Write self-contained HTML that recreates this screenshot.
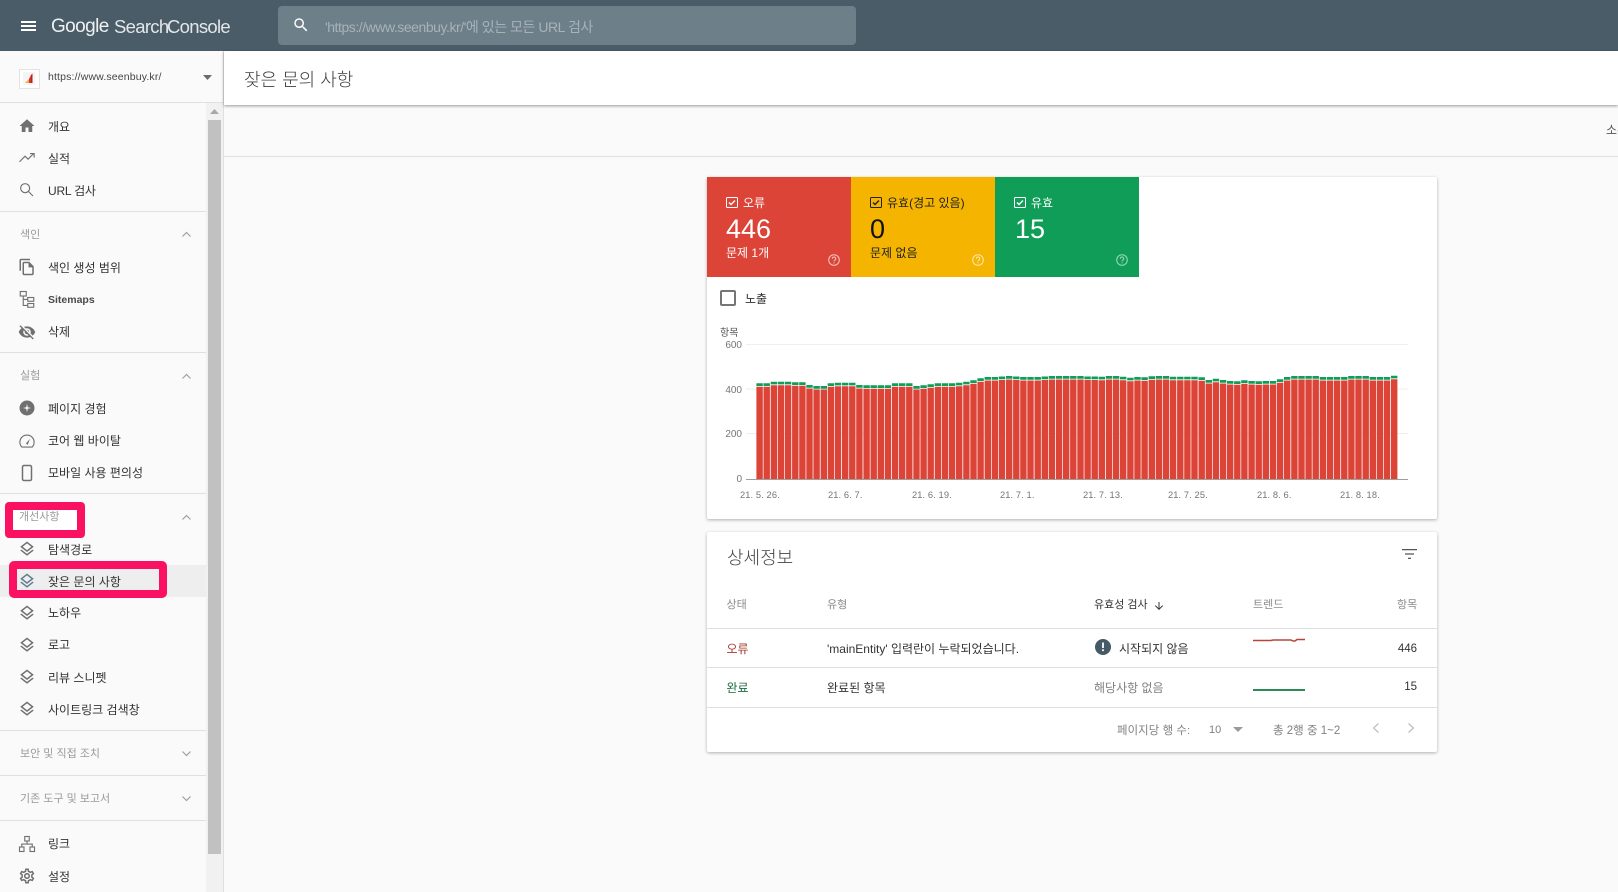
<!DOCTYPE html>
<html lang="ko"><head><meta charset="utf-8"><title>Search Console</title>
<style>
html,body{margin:0;padding:0;width:1618px;height:892px;overflow:hidden;background:#fafafa;font-family:"Liberation Sans","Noto Sans CJK KR",sans-serif;color:#333}
.t{position:absolute;white-space:nowrap;line-height:20px;font-size:12px}
.b{position:absolute}
.d{position:absolute;left:0;width:206px;height:1px;background:#e0e0e0}
.s{color:#9a9a9a;font-size:11px}
svg{position:absolute;overflow:visible}
.i{width:18px;height:18px;left:18px;fill:#707070}
.h{color:#8a8a8a;font-size:11px}
.w{color:#fff}
.ch{fill:none;stroke:#a0a0a0;stroke-width:1.2}
</style></head><body>

<!-- top bar -->
<div class="b" style="left:0;top:0;width:1618px;height:51px;background:#4a5c68"></div>
<div class="b" style="left:21px;top:21px;width:15px;height:1.5px;background:#fff"></div>
<div class="b" style="left:21px;top:25px;width:15px;height:1.5px;background:#fff"></div>
<div class="b" style="left:21px;top:29px;width:15px;height:1.5px;background:#fff"></div>
<div class="t" style="left:51px;top:17px;font-size:19px;color:#eef1f2;letter-spacing:-.6px">Google</div>
<div class="t" style="left:114px;top:17px;font-size:18.5px;color:#e3e7e9;letter-spacing:-.7px">Search</div>
<div class="t" style="left:167px;top:17px;font-size:18.5px;color:#e3e7e9;letter-spacing:-.7px">Console</div>
<div class="b" style="left:278px;top:6px;width:578px;height:39px;background:#6d7f88;border-radius:4px"></div>
<svg style="left:292px;top:16px;width:18px;height:18px;fill:#fff" viewBox="0 0 24 24"><path d="M15.5 14h-.79l-.28-.27A6.471 6.471 0 0 0 16 9.5 6.5 6.5 0 1 0 9.5 16c1.61 0 3.09-.59 4.23-1.57l.27.28v.79l5 4.99L20.49 19l-4.99-5zm-6 0C7.01 14 5 11.99 5 9.5S7.01 5 9.5 5 14 7.01 14 9.5 11.99 14 9.5 14z"/></svg>
<div class="t" style="left:325px;top:17px;font-size:14px;color:#a7b3b9;letter-spacing:-.45px">'https://www.seenbuy.kr/'에 있는 모든 URL 검사</div>

<!-- sidebar -->
<div class="b" style="left:0;top:51px;width:223px;height:841px;background:#fafafa;border-right:1px solid #e0e0e0"></div>
<div class="b" style="left:0;top:102px;width:223px;height:1px;background:#e0e0e0"></div>
<div class="b" style="left:206px;top:103px;width:17px;height:789px;background:#f1f1f1"></div>
<div class="b" style="left:208px;top:120px;width:13px;height:734px;background:#c1c1c1"></div>
<svg style="left:210px;top:109px;width:9px;height:6px;fill:#a8a8a8" viewBox="0 0 9 6"><path d="M4.5 0L9 5H0z"/></svg>

<div class="b" style="left:19px;top:69px;width:19px;height:18px;background:#fff;border:1px solid #e3e3e3"></div>
<svg style="left:23px;top:72px;width:12px;height:13px" viewBox="0 0 12 13"><rect width="12" height="13" fill="#f5f5f5"/><path d="M2 11L6 7V11z" fill="#e8b33a"/><path d="M6 7L8 3V11H6z" fill="#d9322a"/><path d="M8 3l1.5-1.5V11H8z" fill="#b8261f"/></svg>
<div class="t" style="left:48px;top:67px;font-size:10.5px;color:#444;letter-spacing:.15px">https://www.seenbuy.kr/</div>
<svg style="left:203px;top:75px;width:9px;height:5px;fill:#6b6b6b" viewBox="0 0 9 5"><path d="M0 0h9L4.5 5z"/></svg>

<!-- items -->
<svg class="i" style="top:117px" viewBox="0 0 24 24"><path d="M10 20v-6h4v6h5v-8h3L12 3 2 12h3v8z"/></svg>
<div class="t" style="left:48px;top:117px">개요</div>
<svg class="i" style="top:149px;fill:none;stroke:#707070;stroke-width:1.5" viewBox="0 0 24 24"><path d="M2 17l7.400-7.400 4 4L21 6M16 6h5.500v5.500"/></svg>
<div class="t" style="left:48px;top:149px">실적</div>
<svg class="i" style="top:181px;fill:none;stroke:#707070;stroke-width:1.500" viewBox="0 0 24 24"><circle cx="9.500" cy="9.500" r="6"/><path d="M14 14l6 6"/></svg>
<div class="t" style="left:48px;top:181px;letter-spacing:-.2px">URL 검사</div>
<div class="d" style="top:211px"></div>

<div class="t s" style="left:20px;top:225px">색인</div>
<svg class="ch" style="left:182px;top:232px;width:9px;height:5px" viewBox="0 0 9 5"><path d="M.5 4.5L4.5.5l4 4"/></svg>
<svg class="i" style="top:258px" viewBox="0 0 24 24"><path d="M16 1H4c-1.1 0-2 .9-2 2v14h2V3h12V1zm-1 4l6 6v10c0 1.1-.9 2-2 2H7.99C6.89 23 6 22.1 6 21l.01-14c0-1.1.89-2 1.99-2h7zm-1 2H8v14h11v-8.5h-5V7z"/></svg>
<div class="t" style="left:48px;top:258px">색인 생성 범위</div>
<svg class="i" style="top:290px" viewBox="0 0 24 24" fill="none"><g fill="none" stroke="#707070" stroke-width="1.500"><rect x="3" y="2" width="8" height="6"/><rect x="13" y="10" width="8" height="5"/><rect x="13" y="18" width="8" height="5"/><path d="M7 8v12.500h6M7 12.500h6"/></g></svg>
<div class="t" style="left:48px;top:289.500px;font-size:10.500px;font-weight:700;color:#4a4a4a">Sitemaps</div>
<svg class="i" style="top:323px" viewBox="0 0 24 24"><path d="M12 7c2.76 0 5 2.24 5 5 0 .65-.13 1.26-.36 1.83l2.92 2.92c1.51-1.26 2.7-2.89 3.43-4.75-1.73-4.39-6-7.5-11-7.5-1.4 0-2.74.25-3.98.7l2.16 2.16C10.74 7.13 11.35 7 12 7zM2 4.27l2.28 2.28.46.46C3.08 8.3 1.78 10.02 1 12c1.73 4.39 6 7.5 11 7.5 1.55 0 3.03-.3 4.38-.84l.42.42L19.73 22 21 20.73 3.27 3 2 4.27zM7.53 9.8l1.55 1.55c-.05.21-.08.43-.08.65 0 1.66 1.34 3 3 3 .22 0 .44-.03.65-.08l1.55 1.55c-.67.33-1.41.53-2.2.53-2.76 0-5-2.24-5-5 0-.79.2-1.53.53-2.2zm4.31-.78l3.15 3.15.02-.16c0-1.66-1.34-3-3-3l-.17.01z"/></svg>
<div class="t" style="left:48px;top:322px">삭제</div>
<div class="d" style="top:352px"></div>

<div class="t s" style="left:20px;top:366px">실험</div>
<svg class="ch" style="left:182px;top:374px;width:9px;height:5px" viewBox="0 0 9 5"><path d="M.5 4.5L4.5.5l4 4"/></svg>
<svg class="i" style="top:399px" viewBox="0 0 24 24"><path d="M12 2a10 10 0 1 0 0 20 10 10 0 0 0 0-20zm5.500 10L13 13l-1 4.500L11 13l-4.500-1L11 11l1-4.500L13 11z" fill-rule="evenodd"/></svg>
<div class="t" style="left:48px;top:399px">페이지 경험</div>
<svg class="i" style="top:432px" viewBox="0 0 24 24"><g fill="none" stroke="#707070" stroke-width="1.500"><path d="M5 20a9.500 9.500 0 1 1 14 0z"/></g><path d="M10.500 15.500L16 9l-3 8z"/></svg>
<div class="t" style="left:48px;top:431px">코어 웹 바이탈</div>
<svg class="i" style="top:464px" viewBox="0 0 24 24"><rect x="6" y="2" width="12" height="20" rx="2" fill="none" stroke="#707070" stroke-width="2"/></svg>
<div class="t" style="left:48px;top:463px">모바일 사용 편의성</div>
<div class="d" style="top:493px"></div>

<!-- pink 1 -->
<div class="b" style="left:5px;top:502px;width:64px;height:20px;border:8px solid #fb1161;border-radius:4px;background:#fff"></div>
<div class="t s" style="left:19px;top:507px">개선사항</div>
<svg class="ch" style="left:182px;top:515px;width:9px;height:5px" viewBox="0 0 9 5"><path d="M.5 4.5L4.5.5l4 4"/></svg>

<svg class="i" style="top:540px" viewBox="0 0 24 24"><path d="M11.990 18.540l-7.370-5.730L3 14.070l9 7 9-7-1.630-1.270-7.380 5.740zM12 16l7.360-5.730L21 9l-9-7-9 7 1.630 1.270L12 16zm0-11.470L17.740 9 12 13.470 6.260 9 12 4.530z"/></svg>
<div class="t" style="left:48px;top:540px">탐색경로</div>

<div class="b" style="left:0;top:565px;width:206px;height:32px;background:#eeeeee"></div>
<div class="b" style="left:9px;top:561px;width:142px;height:21px;border:8px solid #fb1161;border-radius:5px"></div>
<svg class="i" style="top:572px;fill:#5f7f91" viewBox="0 0 24 24"><path d="M11.990 18.540l-7.370-5.730L3 14.070l9 7 9-7-1.630-1.270-7.380 5.740zM12 16l7.360-5.730L21 9l-9-7-9 7 1.630 1.270L12 16zm0-11.470L17.740 9 12 13.470 6.260 9 12 4.530z"/></svg>
<div class="t" style="left:48px;top:572px">잦은 문의 사항</div>

<svg class="i" style="top:604px" viewBox="0 0 24 24"><path d="M11.990 18.540l-7.370-5.730L3 14.070l9 7 9-7-1.630-1.270-7.380 5.740zM12 16l7.360-5.730L21 9l-9-7-9 7 1.630 1.270L12 16zm0-11.470L17.740 9 12 13.470 6.260 9 12 4.530z"/></svg>
<div class="t" style="left:48px;top:603px">노하우</div>
<svg class="i" style="top:636px" viewBox="0 0 24 24"><path d="M11.990 18.540l-7.370-5.730L3 14.070l9 7 9-7-1.630-1.270-7.380 5.740zM12 16l7.360-5.730L21 9l-9-7-9 7 1.630 1.270L12 16zm0-11.470L17.740 9 12 13.470 6.260 9 12 4.530z"/></svg>
<div class="t" style="left:48px;top:635px">로고</div>
<svg class="i" style="top:668px" viewBox="0 0 24 24"><path d="M11.990 18.540l-7.370-5.730L3 14.070l9 7 9-7-1.630-1.270-7.380 5.740zM12 16l7.360-5.730L21 9l-9-7-9 7 1.630 1.270L12 16zm0-11.470L17.740 9 12 13.470 6.260 9 12 4.530z"/></svg>
<div class="t" style="left:48px;top:668px">리뷰 스니펫</div>
<svg class="i" style="top:700px" viewBox="0 0 24 24"><path d="M11.990 18.540l-7.370-5.730L3 14.070l9 7 9-7-1.630-1.270-7.380 5.740zM12 16l7.360-5.730L21 9l-9-7-9 7 1.630 1.270L12 16zm0-11.470L17.740 9 12 13.470 6.260 9 12 4.530z"/></svg>
<div class="t" style="left:48px;top:700px">사이트링크 검색창</div>
<div class="d" style="top:730px"></div>

<div class="t s" style="left:20px;top:744px">보안 및 직접 조치</div>
<svg class="ch" style="left:182px;top:751px;width:9px;height:5px" viewBox="0 0 9 5"><path d="M.5.5l4 4 4-4"/></svg>
<div class="d" style="top:775px"></div>
<div class="t s" style="left:20px;top:789px">기존 도구 및 보고서</div>
<svg class="ch" style="left:182px;top:796px;width:9px;height:5px" viewBox="0 0 9 5"><path d="M.5.5l4 4 4-4"/></svg>
<div class="d" style="top:820px"></div>

<svg class="i" style="top:835px" viewBox="0 0 24 24"><g fill="none" stroke="#707070" stroke-width="1.500"><rect x="9" y="2" width="6" height="6"/><rect x="2" y="16" width="6" height="6"/><rect x="16" y="16" width="6" height="6"/><path d="M12 8v4M5 16v-4h14v4"/></g></svg>
<div class="t" style="left:48px;top:834px">링크</div>
<svg class="i" style="top:867px" viewBox="0 0 24 24"><path d="M19.430 12.980c.040-.320.070-.640.070-.980s-.030-.660-.070-.980l2.110-1.650c.190-.150.240-.420.120-.640l-2-3.460c-.120-.220-.390-.300-.610-.220l-2.490 1c-.520-.400-1.080-.730-1.690-.980l-.380-2.650C14.460 2.180 14.250 2 14 2h-4c-.250 0-.460.180-.490.420l-.380 2.650c-.610.250-1.170.590-1.690.980l-2.490-1c-.230-.090-.490 0-.610.220l-2 3.460c-.130.220-.070.490.120.640l2.110 1.650c-.040.320-.070.650-.070.980s.030.660.070.980l-2.110 1.650c-.190.150-.240.420-.120.640l2 3.460c.120.220.390.300.610.220l2.490-1c.520.400 1.080.730 1.690.980l.380 2.650c.030.240.240.420.490.420h4c.250 0 .460-.180.490-.420l.380-2.650c.610-.250 1.170-.590 1.690-.980l2.490 1c.230.090.490 0 .610-.220l2-3.460c.120-.220.070-.490-.120-.640l-2.110-1.650zM17.450 11.270c.040.310.050.520.050.730s-.020.430-.050.730l-.140 1.130.890.700 1.080.840-.700 1.210-1.270-.510-1.040-.420-.900.680c-.430.320-.840.560-1.250.730l-1.060.430-.160 1.130-.200 1.350h-1.400l-.190-1.350-.160-1.130-1.060-.430c-.430-.180-.830-.410-1.230-.710l-.910-.700-1.060.430-1.270.510-.700-1.210 1.080-.840.890-.700-.140-1.130C6.520 12.430 6.500 12.200 6.500 12s.020-.430.050-.720l.140-1.130-.890-.700-1.080-.840.700-1.210 1.270.510 1.040.420.900-.680c.430-.320.840-.560 1.250-.730l1.060-.430.160-1.130.200-1.350h1.390l.190 1.350.160 1.130 1.060.430c.430.180.830.410 1.230.710l.910.700 1.060-.430 1.270-.510.700 1.210-1.070.850-.890.700.140 1.130zM12 8c-2.210 0-4 1.790-4 4s1.790 4 4 4 4-1.790 4-4-1.790-4-4-4zm0 6c-1.100 0-2-.9-2-2s.9-2 2-2 2 .9 2 2-.9 2-2 2z"/></svg>
<div class="t" style="left:48px;top:867px">설정</div>

<!-- main header -->
<div class="b" style="left:224px;top:51px;width:1394px;height:54px;background:#fff;box-shadow:0 1px 3px rgba(0,0,0,.4)"></div>
<div class="t" style="left:244px;top:70px;font-size:18px;color:#3c3c3c;font-weight:300">잦은 문의 사항</div>
<div class="b" style="left:224px;top:156px;width:1394px;height:1px;background:#e0e0e0"></div>
<div class="b" style="left:1500px;top:120px;width:118px;height:20px;overflow:hidden"><div class="t" style="left:106px;top:0;color:#555">소유권</div></div>

<!-- card 1 -->
<div class="b" style="left:707px;top:177px;width:730px;height:342px;background:#fff;box-shadow:0 1px 3px rgba(0,0,0,.3);border-radius:2px"></div>
<div class="b" style="left:707px;top:177px;width:144px;height:100px;background:#db4437"></div>
<div class="b" style="left:851px;top:177px;width:144px;height:100px;background:#f4b400"></div>
<div class="b" style="left:995px;top:177px;width:144px;height:100px;background:#0f9d58"></div>

<svg style="left:726px;top:197px;width:12px;height:11px" viewBox="0 0 12 11" fill="none" stroke="#fff"><rect x=".5" y=".5" width="11" height="10" rx="1"/><path d="M3 5.500l2 2 4-4" stroke-width="1.400"/></svg>
<div class="t w" style="left:743px;top:193px">오류</div>
<div class="t w" style="left:726px;top:214px;font-size:27px;line-height:30px">446</div>
<div class="t w" style="left:726px;top:243px">문제 1개</div>
<svg style="left:828px;top:254px;width:12px;height:12px" viewBox="0 0 12 12" fill="none" stroke="#fff" opacity=".7"><circle cx="6" cy="6" r="5.300"/><path d="M4.300 4.700a1.700 1.700 0 1 1 2.500 1.500c-.5.300-.8.600-.8 1.200M6 8.400v1"/></svg>

<svg style="left:870px;top:197px;width:12px;height:11px" viewBox="0 0 12 11" fill="none" stroke="#222"><rect x=".5" y=".5" width="11" height="10" rx="1"/><path d="M3 5.500l2 2 4-4" stroke-width="1.400"/></svg>
<div class="t" style="left:887px;top:193px;color:#222">유효(경고 있음)</div>
<div class="t" style="left:870px;top:214px;font-size:27px;line-height:30px;color:#111">0</div>
<div class="t" style="left:870px;top:243px;color:#222">문제 없음</div>
<svg style="left:972px;top:254px;width:12px;height:12px" viewBox="0 0 12 12" fill="none" stroke="#fff" opacity=".7"><circle cx="6" cy="6" r="5.300"/><path d="M4.300 4.700a1.700 1.700 0 1 1 2.500 1.500c-.5.300-.8.600-.8 1.200M6 8.400v1"/></svg>

<svg style="left:1014px;top:197px;width:12px;height:11px" viewBox="0 0 12 11" fill="none" stroke="#fff"><rect x=".5" y=".5" width="11" height="10" rx="1"/><path d="M3 5.500l2 2 4-4" stroke-width="1.400"/></svg>
<div class="t w" style="left:1031px;top:193px">유효</div>
<div class="t w" style="left:1015px;top:214px;font-size:27px;line-height:30px">15</div>
<svg style="left:1116px;top:254px;width:12px;height:12px" viewBox="0 0 12 12" fill="none" stroke="#fff" opacity=".6"><circle cx="6" cy="6" r="5.300"/><path d="M4.300 4.700a1.700 1.700 0 1 1 2.500 1.500c-.5.300-.8.600-.8 1.200M6 8.400v1"/></svg>

<div class="b" style="left:720px;top:290px;width:12px;height:12px;border:2px solid #757575;border-radius:2px"></div>
<div class="t" style="left:745px;top:289px">노출</div>

<div class="t" style="left:720px;top:324px;font-size:10px;color:#555">항목</div>

<svg style="left:0;top:0;width:1618px;height:892px" viewBox="0 0 1618 892">
<path d="M746 344.500H1408M746 389H1408M746 433.500H1408" stroke="#eeeeee" fill="none"/>
<g font-family="Liberation Sans,sans-serif" font-size="10" fill="#757575" text-anchor="end">
<text x="742" y="348">600</text><text x="742" y="393">400</text><text x="742" y="437">200</text><text x="742" y="482">0</text></g>
<path fill="none" stroke="#db4437" stroke-width="6.400" d="M759.600 479V386.800M766.700 479V386.800M773.900 479V385.200M781 479V385.200M788.100 479V385.200M795.300 479V385.800M802.400 479V385.800M809.500 479V388.500M816.600 479V389.500M823.800 479V389.500M830.900 479V386.800M838 479V386.200M845.200 479V386.200M852.300 479V386.200M859.400 479V388.500M866.600 479V388.800M873.700 479V388.800M880.800 479V388.800M887.900 479V388.800M895.100 479V386.800M902.200 479V386.800M909.300 479V386.800M916.500 479V389.500M923.600 479V388.800M930.700 479V387.800M937.900 479V386.800M945 479V386.800M952.100 479V386.800M959.200 479V386.200M966.400 479V385.200M973.500 479V383.800M980.600 479V381.800M987.800 479V380.500M994.900 479V380.500M1002 479V380M1009.200 479V379.500M1016.300 479V380M1023.400 479V380.500M1030.500 479V380.500M1037.700 479V380.500M1044.800 479V380M1051.900 479V379.500M1059.100 479V379.500M1066.200 479V379.500M1073.300 479V379.500M1080.500 479V379.500M1087.600 479V380M1094.700 479V380M1101.800 479V380.200M1109 479V379.500M1116.100 479V379.500M1123.200 479V380.200M1130.400 479V381.200M1137.500 479V380.500M1144.600 479V380.800M1151.800 479V379.800M1158.900 479V379.500M1166 479V379.500M1173.100 479V380.200M1180.300 479V380.200M1187.400 479V380.200M1194.500 479V380.200M1201.700 479V380.800M1208.800 479V383.500M1215.900 479V382.200M1223.100 479V383.500M1230.200 479V384.500M1237.300 479V384.800M1244.400 479V383.800M1251.600 479V384.500M1258.700 479V384.800M1265.800 479V384.500M1273 479V384.500M1280.100 479V382.800M1287.200 479V380.500M1294.400 479V379.500M1301.500 479V379.500M1308.600 479V379.500M1315.700 479V379.500M1322.900 479V380.500M1330 479V380.500M1337.100 479V380.500M1344.300 479V380.500M1351.400 479V379.500M1358.500 479V379.500M1365.700 479V379.500M1372.800 479V380.500M1379.900 479V380.500M1387 479V380.500M1394.200 479V379.200"/>
<path fill="none" stroke="#0f9d58" stroke-width="6.400" d="M759.600 383.300v2.700M766.700 383.300v2.700M773.900 381.700v2.700M781 381.700v2.700M788.100 381.700v2.700M795.300 382.300v2.700M802.400 382.300v2.700M809.500 385v2.700M816.600 386v2.700M823.800 386v2.700M830.900 383.300v2.700M838 382.700v2.700M845.200 382.700v2.700M852.300 382.700v2.700M859.400 385v2.700M866.600 385.300v2.700M873.700 385.300v2.700M880.800 385.300v2.700M887.900 385.300v2.700M895.100 383.300v2.700M902.200 383.300v2.700M909.300 383.300v2.700M916.500 386v2.700M923.600 385.300v2.700M930.700 384.300v2.700M937.900 383.300v2.700M945 383.300v2.700M952.100 383.300v2.700M959.200 382.700v2.700M966.400 381.700v2.700M973.500 380.300v2.700M980.600 378.300v2.700M987.800 377v2.700M994.900 377v2.700M1002 376.500v2.700M1009.200 376v2.700M1016.300 376.500v2.700M1023.400 377v2.700M1030.500 377v2.700M1037.700 377v2.700M1044.800 376.500v2.700M1051.900 376v2.700M1059.100 376v2.700M1066.200 376v2.700M1073.300 376v2.700M1080.500 376v2.700M1087.600 376.500v2.700M1094.700 376.500v2.700M1101.800 376.700v2.700M1109 376v2.700M1116.100 376v2.700M1123.200 376.700v2.700M1130.400 377.700v2.700M1137.500 377v2.700M1144.600 377.300v2.700M1151.800 376.300v2.700M1158.900 376v2.700M1166 376v2.700M1173.100 376.700v2.700M1180.300 376.700v2.700M1187.400 376.700v2.700M1194.500 376.700v2.700M1201.700 377.300v2.700M1208.800 380v2.700M1215.900 378.700v2.700M1223.100 380v2.700M1230.200 381v2.700M1237.300 381.300v2.700M1244.400 380.300v2.700M1251.600 381v2.700M1258.700 381.300v2.700M1265.800 381v2.700M1273 381v2.700M1280.100 379.300v2.700M1287.200 377v2.700M1294.400 376v2.700M1301.500 376v2.700M1308.600 376v2.700M1315.700 376v2.700M1322.900 377v2.700M1330 377v2.700M1337.100 377v2.700M1344.300 377v2.700M1351.400 376v2.700M1358.500 376v2.700M1365.700 376v2.700M1372.800 377v2.700M1379.900 377v2.700M1387 377v2.700M1394.200 375.700v2.700"/>
<path d="M746 479.500H1408" stroke="#9e9e9e" fill="none"/>
<g font-family="Liberation Sans,sans-serif" font-size="9.300" fill="#757575" letter-spacing=".1">
<text x="740" y="498">21. 5. 26.</text><text x="828" y="498">21. 6. 7.</text><text x="912" y="498">21. 6. 19.</text><text x="1000" y="498">21. 7. 1.</text><text x="1083" y="498">21. 7. 13.</text><text x="1168" y="498">21. 7. 25.</text><text x="1257" y="498">21. 8. 6.</text><text x="1340" y="498">21. 8. 18.</text></g>
</svg>

<!-- card 2 -->
<div class="b" style="left:707px;top:532px;width:730px;height:220px;background:#fff;box-shadow:0 1px 3px rgba(0,0,0,.3);border-radius:2px"></div>
<div class="t" style="left:727px;top:548px;font-size:18px;color:#444;font-weight:300">상세정보</div>
<svg style="left:1402px;top:549px;width:15px;height:10px" viewBox="0 0 15 10" fill="none" stroke="#555" stroke-width="1.200"><path d="M0 .6h15M3 5h9M6 9.400h3"/></svg>

<div class="t h" style="left:726.500px;top:595px">상태</div>
<div class="t h" style="left:827px;top:595px">유형</div>
<div class="t h" style="left:1094px;top:595px;color:#333">유효성 검사</div>
<svg style="left:1153px;top:600px;width:12px;height:12px" viewBox="0 0 24 24" fill="#333"><path d="M20 12l-1.410-1.410L13 16.170V4h-2v12.170l-5.580-5.590L4 12l8 8z"/></svg>
<div class="t h" style="left:1253px;top:595px">트렌드</div>
<div class="t h" style="left:1397px;top:595px">항목</div>

<div class="b" style="left:707px;top:628px;width:730px;height:1px;background:#e0e0e0"></div>
<div class="t" style="left:726.500px;top:637px;color:#a5392c;margin-top:2px">오류</div>
<div class="t" style="left:827px;top:637px;margin-top:2px">'mainEntity' 입력란이 누락되었습니다.</div>
<svg style="left:1095px;top:639px;width:16px;height:16px" viewBox="0 0 16 16"><circle cx="8" cy="8" r="8" fill="#455a64"/><rect x="7.100" y="3.500" width="1.800" height="5.500" fill="#fff"/><rect x="7.100" y="10.300" width="1.800" height="1.800" fill="#fff"/></svg>
<div class="t" style="left:1119px;top:637px;margin-top:2px">시작되지 않음</div>
<svg style="left:1253px;top:636px;width:52px;height:8px" viewBox="0 0 52 8" fill="none" stroke="#b5453a" stroke-width="1.500"><path d="M0 4.500H18L20 4H38L40 5H42L44 3.500H52"/></svg>
<div class="t" style="left:1417px;top:637px;transform:translateX(-100%);margin-top:2px;font-size:11.500px">446</div>

<div class="b" style="left:707px;top:667px;width:730px;height:1px;background:#e0e0e0"></div>
<div class="t" style="left:726.500px;top:678px;color:#1b6b40">완료</div>
<div class="t" style="left:827px;top:678px">완료된 항목</div>
<div class="t" style="left:1094px;top:678px;color:#808080">해당사항 없음</div>
<div class="b" style="left:1253px;top:689px;width:52px;height:2px;background:#2a8a58"></div>
<div class="t" style="left:1417px;top:677px;transform:translateX(-100%);font-size:11.500px">15</div>

<div class="b" style="left:707px;top:707px;width:730px;height:1px;background:#e0e0e0"></div>
<div class="t" style="left:1117px;top:721px;color:#808080;font-size:11.400px;letter-spacing:.1px">페이지당 행 수:</div>
<div class="t" style="left:1209px;top:720px;color:#808080;font-size:11px">10</div>
<svg style="left:1233px;top:727px;width:10px;height:5px;fill:#9a9a9a" viewBox="0 0 10 5"><path d="M0 0h10L5 5z"/></svg>
<div class="t" style="left:1273px;top:721px;color:#808080;font-size:11.500px">총 2행 중 1~2</div>
<svg class="ch" style="left:1373px;top:723px;width:6px;height:10px;stroke:#bdbdbd" viewBox="0 0 6 10"><path d="M5.500.5l-5 4.500 5 4.500"/></svg>
<svg class="ch" style="left:1408px;top:723px;width:6px;height:10px;stroke:#bdbdbd" viewBox="0 0 6 10"><path d="M.5.5l5 4.500-5 4.500"/></svg>
</body></html>
